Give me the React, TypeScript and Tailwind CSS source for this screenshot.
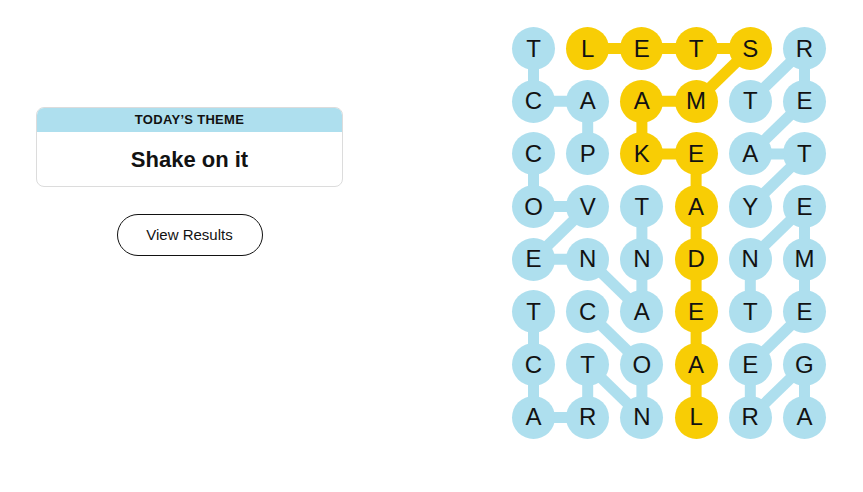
import React from 'react';

type Cell = [number, number];

const BOARD = [
  'TLETSR',
  'CAAMTE',
  'CPKEAT',
  'OVTAYE',
  'ENNDNM',
  'TCAETE',
  'CTOAEG',
  'ARNLRA',
];

// found words, as paths through the board (row, col)
const WORDS: Cell[][] = [
  [[2, 1], [1, 1], [1, 0], [0, 0]], // PACT
  [[2, 0], [3, 0], [3, 1], [4, 0], [4, 1], [5, 2], [4, 2], [3, 2]], // COVENANT
  [[5, 1], [6, 2], [7, 2], [6, 1], [7, 1], [7, 0], [6, 0], [5, 0]], // CONTRACT
  [[1, 4], [0, 5], [1, 5], [2, 4], [2, 5], [3, 4]], // TREATY
  [[7, 5], [6, 5], [7, 4], [6, 4], [5, 5], [4, 5], [3, 5], [4, 4], [5, 4]], // AGREEMENT
];

const SPANGRAM: Cell[] = [
  [0, 1], [0, 2], [0, 3], [0, 4], [1, 3], [1, 2], [2, 2], [2, 3],
  [3, 3], [4, 3], [5, 3], [6, 3], [7, 3],
];

const SIZE = 43;
const STEP_X = 54.2;
const STEP_Y = 52.7;

const BLUE = '#aedfee';
const YELLOW = '#f8cd05';

const center = ([r, c]: Cell) => ({ x: SIZE / 2 + c * STEP_X, y: SIZE / 2 + r * STEP_Y });

const Path = ({ cells, color }: { cells: Cell[]; color: string }) => (
  <>
    {cells.slice(1).map((cell, i) => {
      const a = center(cells[i]);
      const b = center(cell);
      return <line key={i} x1={a.x} y1={a.y} x2={b.x} y2={b.y} stroke={color} strokeWidth={11} />;
    })}
  </>
);

const Board = () => {
  const spanKeys = new Set(SPANGRAM.map(([r, c]) => `${r}-${c}`));
  const width = SIZE + 5 * STEP_X;
  const height = SIZE + 7 * STEP_Y;

  return (
    <div className="relative" style={{ width, height }}>
      <svg className="absolute inset-0" width={width} height={height}>
        {WORDS.map((w, i) => (
          <Path key={i} cells={w} color={BLUE} />
        ))}
        <Path cells={SPANGRAM} color={YELLOW} />
      </svg>
      <div className="relative grid grid-cols-[repeat(6,43px)] gap-x-[11.2px] gap-y-[9.7px]">
        {BOARD.flatMap((row, r) =>
          row.split('').map((ch, c) => (
            <div
              key={`${r}-${c}`}
              className={`w-[43px] h-[43px] rounded-full flex items-center justify-center text-[24px] text-[#121212] ${
                spanKeys.has(`${r}-${c}`) ? 'bg-[#f8cd05]' : 'bg-[#aedfee]'
              }`}
            >
              {ch}
            </div>
          ))
        )}
      </div>
    </div>
  );
};

export default function App() {
  return (
    <div
      className="flex w-[863px] h-[492px] bg-white text-[#121212]"
      style={{ fontFamily: '"Liberation Sans", Arial, sans-serif' }}
    >
      {/* theme + results */}
      <div className="w-[379px] flex flex-col items-center pt-[107px]">
        <div className="w-[307px] rounded-lg border border-[#dcdcdc] overflow-hidden">
          <div className="h-[24px] bg-[#aedfee] flex items-center justify-center text-[13px] font-bold tracking-[0.3px] uppercase">
            Today’s Theme
          </div>
          <div className="h-[54px] flex items-center justify-center text-[22px] font-bold">
            Shake on it
          </div>
        </div>
        <button className="mt-[27px] w-[146px] h-[42px] rounded-full border border-[#121212] text-[15px] bg-white">
          View Results
        </button>
      </div>

      {/* board */}
      <div className="pl-[133px] pt-[27px]">
        <Board />
      </div>
    </div>
  );
}
